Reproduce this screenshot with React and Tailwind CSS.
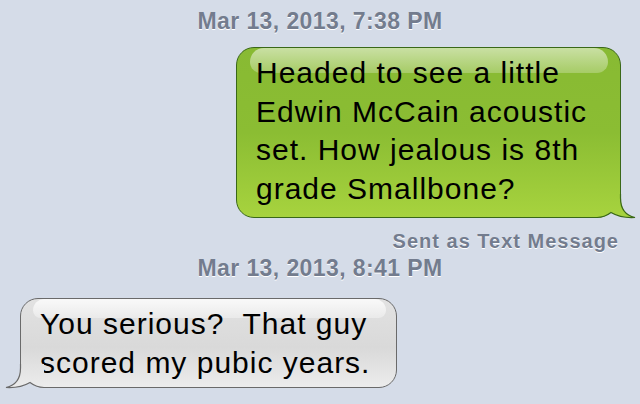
import React from "react";

const BG = "#d5dce8";

// Bubble tail: outer bubble edge sits at x=24 / y=30 inside a 40x32 box
const Tail = ({ id, y1, y2, stops, stroke, flip }) => (
  <svg
    width="40"
    height="32"
    viewBox="0 0 40 32"
    className={
      flip
        ? "absolute left-[-17px] bottom-[-3px] -scale-x-100"
        : "absolute right-[-17px] bottom-[-3px]"
    }
  >
    <defs>
      <linearGradient id={id} gradientUnits="userSpaceOnUse" x1="0" y1={y1} x2="0" y2={y2}>
        {stops.map(([o, c]) => (
          <stop key={o} offset={o} stopColor={c} />
        ))}
      </linearGradient>
    </defs>
    <path
      d="M0,30.5 L0,29.5 C6,29.5 10,27.5 14,24.5 C20,28 30,30 38,29.5 L40,29.5 L40,32 L0,32 Z"
      fill={BG}
    />
    <path
      d="M0,6 L24,6 L24,10 C24,22 29,27.5 38,29.5 C30,30 20,28 14,24.5 C10,27.5 6,29.5 0,29.5 Z"
      fill={`url(#${id})`}
    />
    <path
      d="M23.5,6 L23.5,10 C23.5,22 29,27.5 38,29.5 C30,30 20,28 14,24.5 C10,27.5 6,29.5 0,29.5"
      fill="none"
      stroke={stroke}
      strokeWidth="1.2"
    />
  </svg>
);

const Stamp = ({ children, className = "" }) => (
  <div
    className={`text-center text-[23px] leading-[28px] font-bold tracking-[0.4px] text-[#737c8e] [text-shadow:0_1px_0_#ffffff] ${className}`}
  >
    {children}
  </div>
);

export default function App() {
  return (
    <div className="w-[640px] h-[404px] overflow-hidden bg-[#d5dce8] font-['Liberation_Sans',Arial,sans-serif]">
      <Stamp className="pt-[7px]">Mar 13, 2013, 7:38 PM</Stamp>

      {/* sent message */}
      <div className="mt-[12px] flex justify-end pr-[19px]">
        <div className="relative w-[385px] rounded-[18px] rounded-br-none border border-[#3a6818] bg-[linear-gradient(to_bottom,#88ba33_0%,#8bbd33_50%,#a7d33e_100%)] pl-[19px] pr-[20px] pt-[6px] pb-[9px] text-[30px] leading-[38.5px] tracking-[1px] text-black">
          <div className="absolute left-[13px] right-[12px] top-0 h-[25px] rounded-t-[15px] rounded-b-[12px] bg-gradient-to-b from-white/55 to-white/25" />
          <p className="relative">
            Headed to see a little Edwin McCain acoustic set. How jealous is 8th grade Smallbone?
          </p>
          <Tail
            id="greenTail"
            y1={-140}
            y2={29}
            stops={[
              ["0", "#88ba33"],
              ["0.5", "#8bbd33"],
              ["1", "#a7d33e"],
            ]}
            stroke="#3a6818"
          />
        </div>
      </div>

      <div className="mt-[11px] pr-[21px] text-right text-[20px] leading-[24px] font-bold tracking-[1px] text-[#737c8e] [text-shadow:0_1px_0_#ffffff]">
        Sent as Text Message
      </div>

      <Stamp className="mt-[1px]">Mar 13, 2013, 8:41 PM</Stamp>

      {/* received message */}
      <div className="mt-[16px] flex pl-[20px]">
        <div className="relative w-fit rounded-[18px] rounded-bl-none border border-[#6a6a6a] bg-[linear-gradient(to_bottom,#e2e2e2_0%,#d9d9d9_55%,#ececec_100%)] pl-[19px] pr-[26px] pt-[6px] pb-[5px] text-[30px] leading-[38.5px] tracking-[1px] text-black">
          <div className="absolute left-[12px] right-[10px] top-0 h-[19px] rounded-t-[15px] rounded-b-[10px] bg-gradient-to-b from-white/80 to-white/35" />
          <p className="relative whitespace-pre">
            {"You serious?  That guy\nscored my pubic years."}
          </p>
          <Tail
            id="grayTail"
            y1={-59}
            y2={29}
            stops={[
              ["0", "#e2e2e2"],
              ["0.55", "#d9d9d9"],
              ["1", "#ececec"],
            ]}
            stroke="#6a6a6a"
            flip
          />
        </div>
      </div>
    </div>
  );
}
